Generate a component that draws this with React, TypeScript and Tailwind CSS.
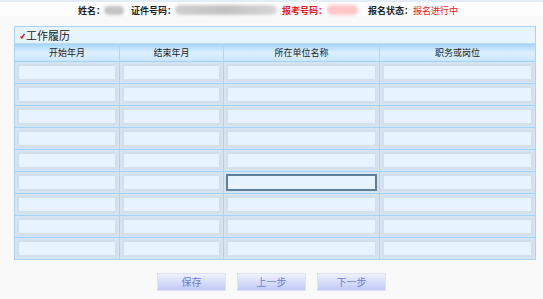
import React from "react";

const cols = ["开始年月", "结束年月", "所在单位名称", "职务或岗位"];
const rows = Array.from({ length: 9 });

export default function App() {
  return (
    <div
      className="w-[543px] h-[299px] bg-[#f9f9f9] overflow-hidden text-[#222]"
      style={{ fontFamily: '"Noto Sans CJK SC", "Noto Sans", sans-serif' }}
    >
      <div className="h-[2px] bg-[#e2edf7]" />
      {/* info bar */}
      <div className="h-[14px] bg-[#fdfdfd] flex items-center pt-[2px] pl-[78px] text-[9px] leading-none font-bold">
        <span>姓名：</span>
        <span className="ml-[-1px] w-[20px] h-[9px] rounded-full bg-[#c4c4c4] blur-[1.5px]" />
        <span className="ml-[7px]">证件号码：</span>
        <span className="ml-[-1px] w-[102px] h-[10px] rounded-full bg-gradient-to-r from-[#cfcfcf] via-[#c2c2c2] to-[#d8d8d8] blur-[1.5px]" />
        <span className="ml-[5px] text-[#f01818]">报考号码：</span>
        <span className="ml-[0px] w-[31px] h-[10px] rounded-full bg-[#ffc7c7] blur-[1.5px]" />
        <span className="ml-[10px]">报名状态：</span>
        <span className="text-[#f01818] font-normal">报名进行中</span>
      </div>

      {/* panel */}
      <div className="mt-[10px] ml-[14px] w-[522px] border border-[#abd4f4] bg-[#e8f4fd]">
        <div className="h-[17px] flex items-center pl-[5px] border-b border-[#b7dbf6]">
          <svg width="5" height="6" viewBox="0 0 5 6" className="mt-[2px]">
            <path d="M0.5 3.5 L1.8 5 L4.5 0.8" stroke="#d21a1a" strokeWidth="1.4" fill="none" />
          </svg>
          <span className="ml-[1px] text-[11px] leading-none text-[#222]">工作履历</span>
        </div>
        <div className="grid grid-cols-[105px_104px_156px_155px]">
          {cols.map((c, i) => (
            <div
              key={c}
              className={`h-[17px] flex items-center justify-center text-[9px] leading-none bg-gradient-to-b from-[#a7d5f8] via-[#dcefff] to-[#cbe6fb] ${
                i < 3 ? "border-r border-[#bfd3e4]" : ""
              }`}
            >
              {c}
            </div>
          ))}
          {rows.map((_, r) =>
            cols.map((c, i) => (
              <div
                key={`${r}-${c}`}
                className={`h-[22px] border-t border-[#9fd3f9] p-[2px] bg-[#d6e3f1] ${
                  i < 3 ? "border-r border-r-[#a6d6f8]" : ""
                }`}
              >
                <div
                  className={`h-full border-2 bg-[#e7f3fe] ${
                    r === 5 && i === 2 ? "border-[#5e7f98]" : "border-[#d3dfec]"
                  }`}
                />
              </div>
            ))
          )}
        </div>
      </div>

      {/* buttons */}
      <div className="mt-[13px] pl-[157px] flex gap-[11px]">
        {["保存", "上一步", "下一步"].map((b) => (
          <button
            key={b}
            className="w-[69px] h-[18px] border border-[#dde3f2] bg-gradient-to-b from-[#eff2fd] to-[#c2caf6] text-[10px] leading-none text-[#6c7cd6] flex items-center justify-center"
          >
            {b}
          </button>
        ))}
      </div>
    </div>
  );
}
